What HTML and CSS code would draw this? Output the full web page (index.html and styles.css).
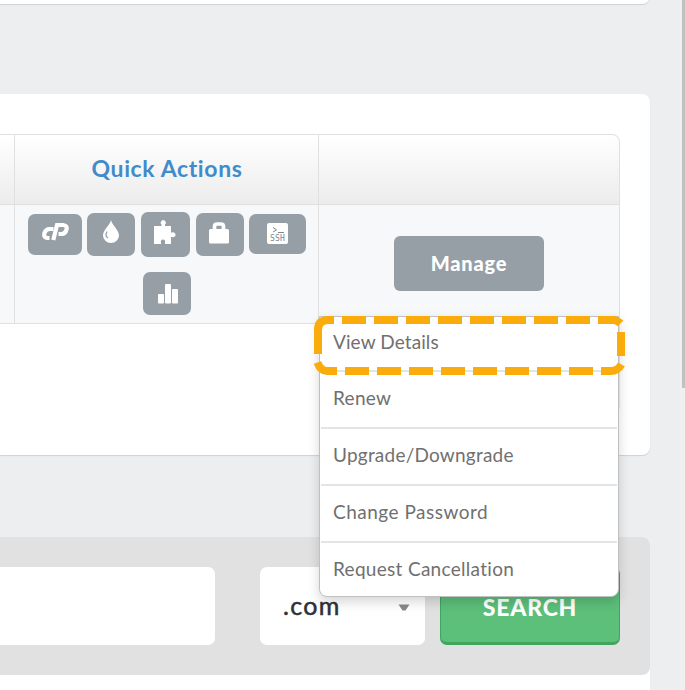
FILE: index.html
```html
<!DOCTYPE html>
<html lang="en">
<head>
<meta charset="utf-8">
<title>My Services</title>
<link rel="stylesheet" href="styles.css">
</head>
<body>
<main class="page">
  <section class="panel panel-top"></section>
  <section class="panel services">
    <div class="table">
      <div class="row head"><div class="cell first"></div><div class="cell actions-head"><span class="title">Quick Actions</span></div><div class="cell last"></div></div>
      <div class="row body">
        <div class="cell first"></div>
        <div class="cell actions">
          <div class="icons">
            <a class="icon cpanel"><svg width="28" height="20" viewBox="0 0 28 20"><g fill="none" stroke="#fff" stroke-width="4.2"><path d="M12.500 7H8.800Q4.600 7 3.300 11.300Q2.500 16 6.600 16H8.500"/><path d="M12.300 18L16 3H22Q26.600 3.300 25.500 7.500Q24.500 12 20.500 12H17.500"/></g></svg></a>
            <a class="icon drop"><svg width="18" height="25" viewBox="0 0 18 25"><path fill="#fff" d="M9 1C8 6 1 11 1 16.500A8 7.500 0 0 0 17 16.500C17 11 10 6 9 1Z"/><path fill="none" stroke="#969ea6" stroke-width="1.300" d="M5 12.500C3.200 16 4 18 6 19"/></svg></a>
            <a class="icon puzzle"><svg width="24" height="24" viewBox="0 0 24 24"><path fill="#fff" d="M1 6H8.500V4.500A2.500 2.500 0 1 1 12 4.500V6H18V12.500H19A2.500 2.500 0 1 1 19 17H18V24H12V22.500A2.200 2.200 0 1 0 8 22.500V24H1Z"/></svg></a>
            <a class="icon bag"><svg width="20" height="22" viewBox="0 0 20 22"><path fill="none" stroke="#fff" stroke-width="3.700" d="M5.500 10V4.500Q5.500 2 8 2H12Q14.500 2 14.500 4.500V10"/><rect y="7" width="20" height="14.500" rx="1.500" fill="#fff"/></svg></a>
            <a class="icon ssh"><span class="terminal"><svg width="14" height="8" viewBox="0 0 14 8" fill="none" stroke="#7d8790"><path d="M2 0.500L5.500 2.800L2 5M7 5.500H13"/></svg><span>SSH</span></span></a>
            <a class="icon chart"><svg width="20" height="20" viewBox="0 0 20 20" fill="#fff"><rect y="10" width="6" height="9.500" rx="1"/><rect x="7" width="6" height="19.500" rx="1"/><rect x="14" y="5" width="6" height="14.500" rx="1"/></svg></a>
          </div>
        </div>
        <div class="cell last manage-cell"><button class="manage"><span class="manage-label">Manage</span></button>
          <div class="menu">
            <a class="item"><span class="t1">View Details</span></a>
            <a class="item"><span class="t2">Renew</span></a>
            <a class="item"><span class="t3">Upgrade/Downgrade</span></a>
            <a class="item"><span class="t4">Change Password</span></a>
            <a class="item"><span class="t5">Request Cancellation</span></a>
            <svg class="highlight" width="320" height="68" viewBox="310 312 320 68" fill="none" stroke="#f9ac0b" stroke-width="8">
              <path d="M318 354V330Q318 320 328 320H334"/>
              <path d="M342 320H590" stroke-dasharray="24 8"/>
              <path d="M598 320H613Q617 320 620.500 323.500"/>
              <path d="M621 332V356"/>
              <path d="M621.500 364.500Q617.500 371 611 371H601"/>
              <path d="M345 371H593" stroke-dasharray="24 8"/>
              <path d="M337 371H327Q320.500 371 317.500 362.500"/>
            </svg>
          </div>
        </div>
      </div>
      <div class="tail"></div>
    </div>
  </section>
  <section class="domain">
    <div class="searchbar">
      <div class="field"></div>
      <div class="select"><span class="tld">.com</span><svg width="12" height="8" viewBox="0 0 12 8"><path fill="#888" d="M0.500 0.500H11.500L7.500 6.500H4.500Z"/></svg></div>
      <button class="search"><span class="search-label">SEARCH</span></button>
    </div>
  </section>
</main>
<aside class="scroll"><div class="thumb"></div></aside>
</body>
</html>
```
FILE: styles.css
```css
* { box-sizing: border-box; }
body { margin: 0; width: 685px; height: 690px; overflow: hidden; display: flex; justify-content: space-between; background: #edeef0; font-family: Lato, "Liberation Sans", sans-serif; font-variant-ligatures: none; }
button { border: 0; padding: 0; font-family: inherit; }
span { white-space: nowrap; }
.page { width: 650px; display: flex; flex-direction: column; }
.panel { background: #fff; box-shadow: 0 1px 1px #cfd0d1; flex: none; }
.panel-top { height: 12px; margin-top: -8px; border-radius: 0 0 8px 0; }
.services { margin-top: 90px; height: 361px; border-radius: 0 8px 8px 0; padding: 40px 30px 0 0; }
.row { display: grid; grid-template-columns: 15px 304px 301px; }
.head { height: 71px; border-top: 1px solid #e0e0e0; border-bottom: 1px solid #e0e0e0; border-radius: 0 8px 0 0; background: linear-gradient(#fff, #ececec); }
.body { height: 119px; border-bottom: 1px solid #e0e0e0; background: #f6f8fa; }
.cell { border-right: 1px solid #e0e0e0; }
.head .last { border-radius: 0 8px 0 0; }
.actions-head { display: flex; align-items: center; justify-content: center; color: #428bca; font-size: 23px; font-weight: 700; padding: 0 0 4px 1px; }
.title { letter-spacing: 0.62px; }
.tail { height: 90px; border-right: 1px solid #ebebeb; border-radius: 0 0 8px 0; }
.icons { display: grid; grid-template-columns: 54px 48px 49px 48px 57px; column-gap: 5px; grid-template-rows: 45px 43px; row-gap: 15px; padding: 7px 0 0 13px; align-items: center; }
.icon { display: flex; justify-content: center; align-items: flex-start; background: #969ea6; border-radius: 7px; height: 43px; padding-top: 9px; }
.cpanel { height: 41px; padding-top: 8px; }
.drop { padding-top: 6px; }
.puzzle { height: 45px; padding: 8px 2px 0 0; margin: 0 -1px 0 1px; }
.bag { margin: 0 -2px 0 2px; padding-right: 2px; }
.ssh { height: 40px; padding-top: 9px; margin: -1px -2px 0 2px; }
.chart { grid-column: 3; padding: 12px 0 0 1px; width: 48px; margin-left: 3px; }
.terminal { display: flex; flex-direction: column; width: 21px; height: 21px; border-radius: 2px; background: #fff; color: #7d8790; font: 8px/8px "DejaVu Sans Mono", monospace; padding: 4px 0 0 3px; }
.terminal svg { margin-left: 1px; flex: none; }
.terminal span { letter-spacing: 0.2px; }
.manage-cell { position: relative; padding: 31px 0 0 75px; }
.manage { width: 150px; height: 55px; border-radius: 6px; background: #969ea6; color: #fff; font-size: 20px; font-weight: 900; padding-bottom: 2px; }
.manage-label { letter-spacing: 0.8px; }
.menu { position: absolute; z-index: 5; left: 0; top: 111px; width: 300px; height: 281px; background: #fff; border: 1px solid #bfc0c2; border-radius: 0 0 8px 8px; box-shadow: 0 5px 12px rgba(0,0,0,.16); padding: 0 1px; color: #707070; font-size: 19px; }
.item { display: flex; align-items: center; height: 57px; padding: 0 0 4px 12px; border-bottom: 2px solid #e4e4e4; }
.item:first-child { height: 55px; padding-bottom: 5px; }
.item:nth-child(5) { height: 53px; border: 0; padding-bottom: 2px; }
.t1 { letter-spacing: 0.1px; }
.t2 { letter-spacing: 0.3px; }
.t3 { letter-spacing: 0.22px; }
.t4 { letter-spacing: 0.5px; }
.t5 { letter-spacing: 0.3px; }
.highlight { position: absolute; left: -10px; top: -5px; }
.domain { margin-top: 82px; height: 153px; flex: none; background: #fff; border-radius: 0 8px 0 0; }
.searchbar { height: 138px; padding: 30px 30px 30px 0; display: flex; background: #e1e1e1; border-radius: 0 8px 8px 0; }
.field { width: 215px; background: #fff; border-radius: 0 7px 7px 0; }
.select { width: 165px; margin: 0 15px 0 45px; border-radius: 7px; background: #fff; display: flex; align-items: center; justify-content: space-between; padding: 0 15px 0 23px; color: #2e3136; font-size: 25px; }
.tld { letter-spacing: 1.3px; -webkit-text-stroke: 0.5px #2e3136; margin-top: -3px; }
.select svg { margin-top: 4px; }
.search { width: 180px; border-radius: 7px; background: #5cbf7a; border: 1px solid #3fa65e; border-bottom-width: 3px; color: #fff; font-size: 23px; font-weight: 900; padding-top: 3px; }
.search-label { letter-spacing: 0.8px; }
.scroll { width: 5px; height: 690px; background: #f0f0f1; padding-left: 2px; }
.thumb { height: 388px; background: #c1c1c1; }
```
